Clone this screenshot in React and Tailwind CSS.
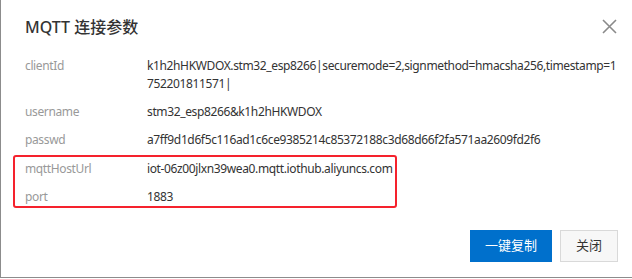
import React from "react";

const rows = [
  { k: "clientId", v: "k1h2hHKWDOX.stm32_esp8266|securemode=2,signmethod=hmacsha256,timestamp=1752201811571|" },
  { k: "username", v: "stm32_esp8266&k1h2hHKWDOX" },
  { k: "passwd", v: "a7ff9d1d6f5c116ad1c6ce9385214c85372188c3d68d66f2fa571aa2609fd2f6" },
];

function Row({ k, v }) {
  return (
    <div className="flex py-[5px] leading-[18px] text-[12px] tracking-[-0.37px]">
      <div className="w-[122px] shrink-0 text-[#999]">{k}</div>
      <div className="w-[470px] break-all text-[#333]">{v}</div>
    </div>
  );
}

export default function App() {
  return (
    <div
      className="relative w-[632px] h-[279px] bg-white overflow-hidden"
      style={{ fontFamily: '"Noto Sans", "Noto Sans CJK SC", sans-serif' }}
    >
      <div className="h-[278px] border-l border-b border-[#8c8c8c] flex flex-col">
        <div className="flex items-center justify-between pl-[24px] pr-[15px] pt-[16px] h-[38px]">
          <div className="text-[16px] leading-[22px] font-medium text-[#333]">MQTT 连接参数</div>
          <svg width="15" height="15" viewBox="0 0 15 15" className="mt-[-2px]">
            <path d="M1 1 L14 14 M14 1 L1 14" stroke="#8a8a8a" strokeWidth="1.6" fill="none" />
          </svg>
        </div>
        <div className="pl-[24px] pt-[14px]">
          {rows.map((r) => (
            <Row key={r.k} {...r} />
          ))}
          <div className="relative mt-[1px]">
            <Row k="mqttHostUrl" v="iot-06z00jlxn39wea0.mqtt.iothub.aliyuncs.com" />
            <Row k="port" v="1883" />
            <div className="absolute left-[-12px] top-[0px] w-[384px] h-[53px] border-2 border-[#f5222d] rounded-[3px]" />
          </div>
        </div>
        <div className="flex justify-end gap-[8px] pr-[14px] mt-[19px]">
          <button className="w-[82px] h-[32px] bg-[#0070cc] text-white text-[13px]">一键复制</button>
          <button className="w-[58px] h-[32px] bg-[#f7f7f7] border border-[#d9d9d9] text-[#333] text-[13px]">关闭</button>
        </div>
      </div>
    </div>
  );
}
